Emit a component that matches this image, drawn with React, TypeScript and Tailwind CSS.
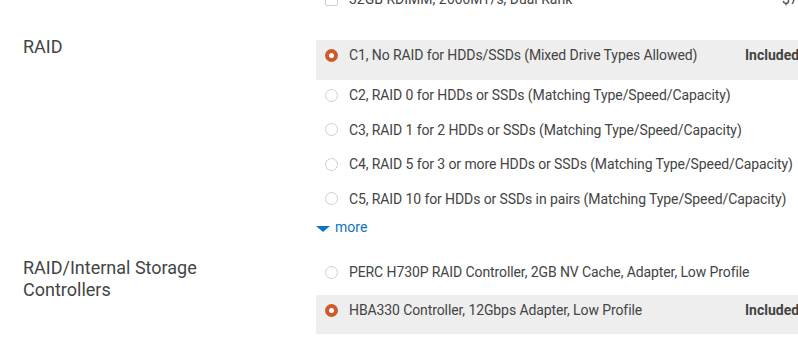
import React from 'react'

type Opt = { text: string; selected?: boolean; price?: string; h: string }

function Radio({ selected }: { selected?: boolean }) {
  if (selected) {
    return (
      <span className="flex h-[13px] w-[13px] shrink-0 items-center justify-center rounded-full bg-[#cc5a2c]">
        <span className="h-[5px] w-[5px] rounded-full bg-white" />
      </span>
    )
  }
  return <span className="h-[13px] w-[13px] shrink-0 rounded-full border border-[#cfcfcf] bg-white" />
}

function OptionRow({ opt }: { opt: Opt }) {
  return (
    <div className={`flex items-start px-[9px] pt-[5px] ${opt.h} ${opt.selected ? 'bg-[#eeeeee]' : ''}`}>
      <div className="flex h-[20px] items-center">
        <Radio selected={opt.selected} />
      </div>
      <div className="ml-[11px] w-[396px] shrink-0 whitespace-nowrap text-[14px] leading-[20px] tracking-[-0.1px]">
        {opt.text}
      </div>
      {opt.price && <div className="whitespace-nowrap text-[14px] font-bold leading-[20px]">{opt.price}</div>}
    </div>
  )
}

const raid: Opt[] = [
  { text: 'C1, No RAID for HDDs/SSDs (Mixed Drive Types Allowed)', selected: true, price: 'Included in Price', h: 'h-[40px]' },
  { text: 'C2, RAID 0 for HDDs or SSDs (Matching Type/Speed/Capacity)', h: 'h-[34.5px]' },
  { text: 'C3, RAID 1 for 2 HDDs or SSDs (Matching Type/Speed/Capacity)', h: 'h-[34.5px]' },
  { text: 'C4, RAID 5 for 3 or more HDDs or SSDs (Matching Type/Speed/Capacity)', h: 'h-[34.5px]' },
  { text: 'C5, RAID 10 for HDDs or SSDs in pairs (Matching Type/Speed/Capacity)', h: 'h-[33.5px]' },
]

const controllers: Opt[] = [
  { text: 'PERC H730P RAID Controller, 2GB NV Cache, Adapter, Low Profile', h: 'h-[38px]' },
  { text: 'HBA330 Controller, 12Gbps Adapter, Low Profile', selected: true, price: 'Included in Price', h: 'h-[39px]' },
]

export default function App() {
  return (
    <div className="h-[349px] w-[798px] overflow-hidden bg-white font-['Roboto',sans-serif] text-[#444]">
      <div className="-mt-[11px] flex h-[51px]">
        <div className="w-[316px] shrink-0" />
        <div className="flex h-[20px] w-[600px] shrink-0 items-center px-[9px]">
          <span className="h-[13px] w-[13px] shrink-0 rounded-[2px] border border-[#cfcfcf]" />
          <span className="ml-[11px] w-[433px] shrink-0 whitespace-nowrap text-[14px]">32GB RDIMM, 2666MT/s, Dual Rank</span>
          <span className="whitespace-nowrap text-[14px]">$749.00</span>
        </div>
      </div>

      <div className="flex">
        <div className="-mt-[4px] w-[316px] shrink-0 pl-[23px] text-[18px] leading-[22px]">RAID</div>
        <div className="w-[600px] shrink-0">
          {raid.map((o) => (
            <OptionRow key={o.text} opt={o} />
          ))}
          <div className="flex h-[20px] items-center text-[14px] leading-[20px] text-[#0b76c6]">
            <svg width="14" height="6" viewBox="0 0 14 6" className="mt-[3px]">
              <polygon points="0,0 14,0 7,6" fill="#0b76c6" />
            </svg>
            <span className="ml-[5px]">more</span>
          </div>
        </div>
      </div>

      <div className="mt-[20px] flex">
        <div className="w-[316px] shrink-0 pl-[23px] text-[18px] leading-[22px]">
          RAID/Internal Storage
          <br />
          Controllers
        </div>
        <div className="w-[600px] shrink-0">
          {controllers.map((o) => (
            <OptionRow key={o.text} opt={o} />
          ))}
        </div>
      </div>
    </div>
  )
}
